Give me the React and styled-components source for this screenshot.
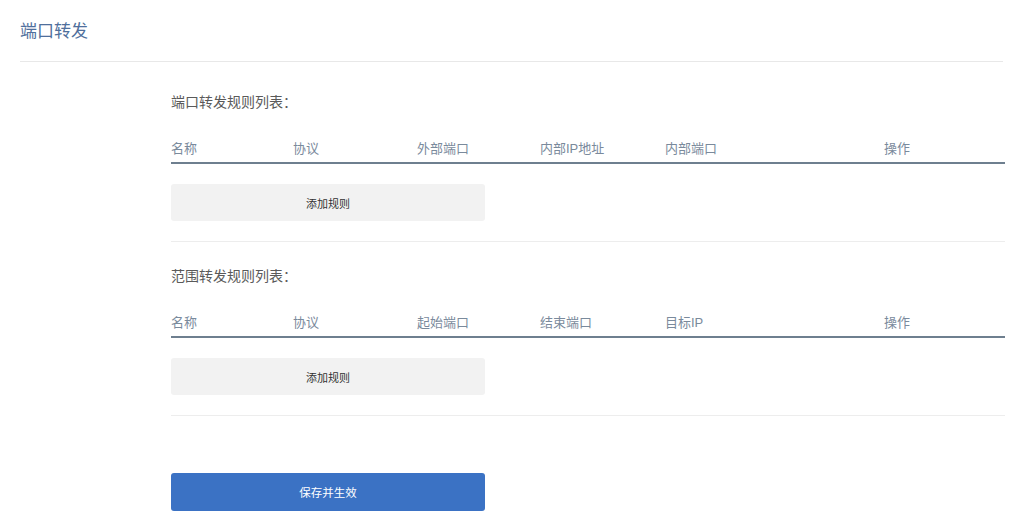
import styled, { createGlobalStyle } from "styled-components";

const GlobalStyle = createGlobalStyle`
  body {
    margin: 0;
    background: #fff;
    font-family: "Liberation Sans", "Noto Sans CJK SC", sans-serif;
  }
`

const portColumns = ['名称', '协议', '外部端口', '内部IP地址', '内部端口', '操作']
const rangeColumns = ['名称', '协议', '起始端口', '结束端口', '目标IP', '操作']

function RuleSection({title, columns, top}) {
    return (
        <Section $top={top}>
            <SectionTitle>{title}</SectionTitle>
            <HeaderRow>
                {columns.map((c) => <HeaderCell key={c}>{c}</HeaderCell>)}
            </HeaderRow>
            <AddButton>添加规则</AddButton>
        </Section>
    )
}

function App() {
    return (
        <>
            <GlobalStyle/>
            <Page>
                <TopBar>
                    <PageTitle>端口转发</PageTitle>
                </TopBar>
                <Content>
                    <RuleSection title="端口转发规则列表：" columns={portColumns} top={30}/>
                    <RuleSection title="范围转发规则列表：" columns={rangeColumns} top={24}/>
                    <SaveButton>保存并生效</SaveButton>
                </Content>
            </Page>
        </>
    )
}

export default App;

const Page = styled.div`
  width: 1024px;
  height: 532px;
  overflow: hidden;
`

const TopBar = styled.div`
  margin: 0 21px 0 20px;
  padding-top: 20px;
  height: 41px;
  border-bottom: 1px solid #e8e8e8;
`

const PageTitle = styled.div`
  font-size: 17px;
  line-height: 24px;
  color: #4f6f9c;
`

const Content = styled.div`
  padding: 0 19px 0 171px;
`

const Section = styled.div`
  padding-top: ${(p) => p.$top}px;
  padding-bottom: 20px;
  border-bottom: 1px solid #ededed;
`

const SectionTitle = styled.div`
  font-size: 14px;
  line-height: 20px;
  color: #5a5a5a;
`

const HeaderRow = styled.div`
  display: grid;
  grid-template-columns: 122px 124px 123px 125px 219px 1fr;
  margin-top: 21px;
  height: 28px;
  padding-bottom: 1px;
  align-items: center;
  border-bottom: 2px solid #6e7f8f;
`

const HeaderCell = styled.div`
  font-size: 13px;
  color: #7a8a9c;
`

const AddButton = styled.button`
  display: block;
  margin-top: 20px;
  width: 314px;
  height: 37px;
  border: none;
  border-radius: 3px;
  background: #f2f2f2;
  color: #333;
  font-family: inherit;
  font-size: 11px;
`

const SaveButton = styled.button`
  display: block;
  margin-top: 57px;
  width: 314px;
  height: 38px;
  border: none;
  border-radius: 3px;
  background: #3b72c4;
  color: #fff;
  font-family: inherit;
  font-size: 11.5px;
`
